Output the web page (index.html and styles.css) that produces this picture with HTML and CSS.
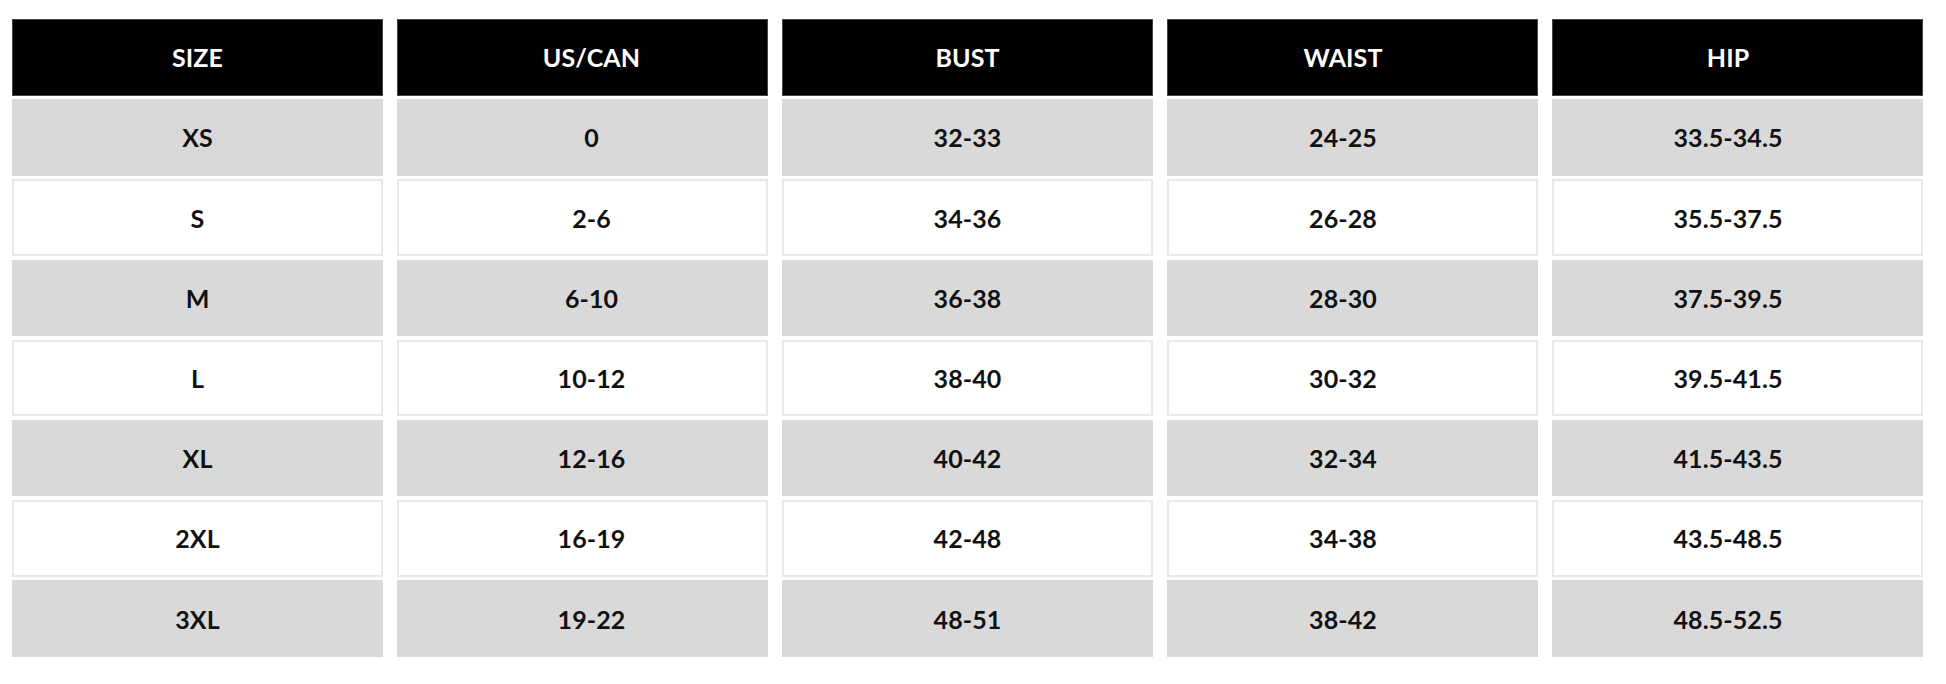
FILE: index.html
```html
<!DOCTYPE html>
<html>
<head>
<meta charset="utf-8">
<link rel="stylesheet" href="styles.css">
</head>
<body>
<div class="chart">
  <div class="col">
    <div class="cell head">SIZE</div>
    <div class="cell gray">XS</div>
    <div class="cell white">S</div>
    <div class="cell gray">M</div>
    <div class="cell white">L</div>
    <div class="cell gray">XL</div>
    <div class="cell white">2XL</div>
    <div class="cell gray">3XL</div>
  </div>
  <div class="col shift-right">
    <div class="cell head">US/CAN</div>
    <div class="cell gray">0</div>
    <div class="cell white">2-6</div>
    <div class="cell gray">6-10</div>
    <div class="cell white">10-12</div>
    <div class="cell gray">12-16</div>
    <div class="cell white">16-19</div>
    <div class="cell gray">19-22</div>
  </div>
  <div class="col">
    <div class="cell head">BUST</div>
    <div class="cell gray">32-33</div>
    <div class="cell white">34-36</div>
    <div class="cell gray">36-38</div>
    <div class="cell white">38-40</div>
    <div class="cell gray">40-42</div>
    <div class="cell white">42-48</div>
    <div class="cell gray">48-51</div>
  </div>
  <div class="col shift-left">
    <div class="cell head">WAIST</div>
    <div class="cell gray">24-25</div>
    <div class="cell white">26-28</div>
    <div class="cell gray">28-30</div>
    <div class="cell white">30-32</div>
    <div class="cell gray">32-34</div>
    <div class="cell white">34-38</div>
    <div class="cell gray">38-42</div>
  </div>
  <div class="col shift-left">
    <div class="cell head">HIP</div>
    <div class="cell gray">33.5-34.5</div>
    <div class="cell white">35.5-37.5</div>
    <div class="cell gray">37.5-39.5</div>
    <div class="cell white">39.5-41.5</div>
    <div class="cell gray">41.5-43.5</div>
    <div class="cell white">43.5-48.5</div>
    <div class="cell gray">48.5-52.5</div>
  </div>
</div>
</body>
</html>
```
FILE: styles.css
```css
html, body {
  margin: 0;
  padding: 0;
  background: #ffffff;
}
body {
  font-family: "Lato", "Open Sans", sans-serif;
}
.chart {
  display: flex;
  gap: 14px;
  padding: 19px 0 0 12px;
}
.col {
  display: grid;
  grid-template-rows: repeat(8, 76.5px);
  row-gap: 3.7px;
  width: 371px;
}
.cell {
  display: flex;
  align-items: center;
  justify-content: center;
  box-sizing: border-box;
  font-weight: 700;
  font-size: 25px;
  letter-spacing: 0.1px;
  color: #111111;
}
.shift-right .cell {
  padding-left: 18px;
}
.shift-left .cell {
  padding-right: 19px;
}
.head {
  background: #000000;
  color: #ffffff;
  border: 1px solid #444444;
}
.gray {
  background: #d9d9d9;
}
.white {
  background: #ffffff;
  border: 2px solid #e8e8e8;
}
```
